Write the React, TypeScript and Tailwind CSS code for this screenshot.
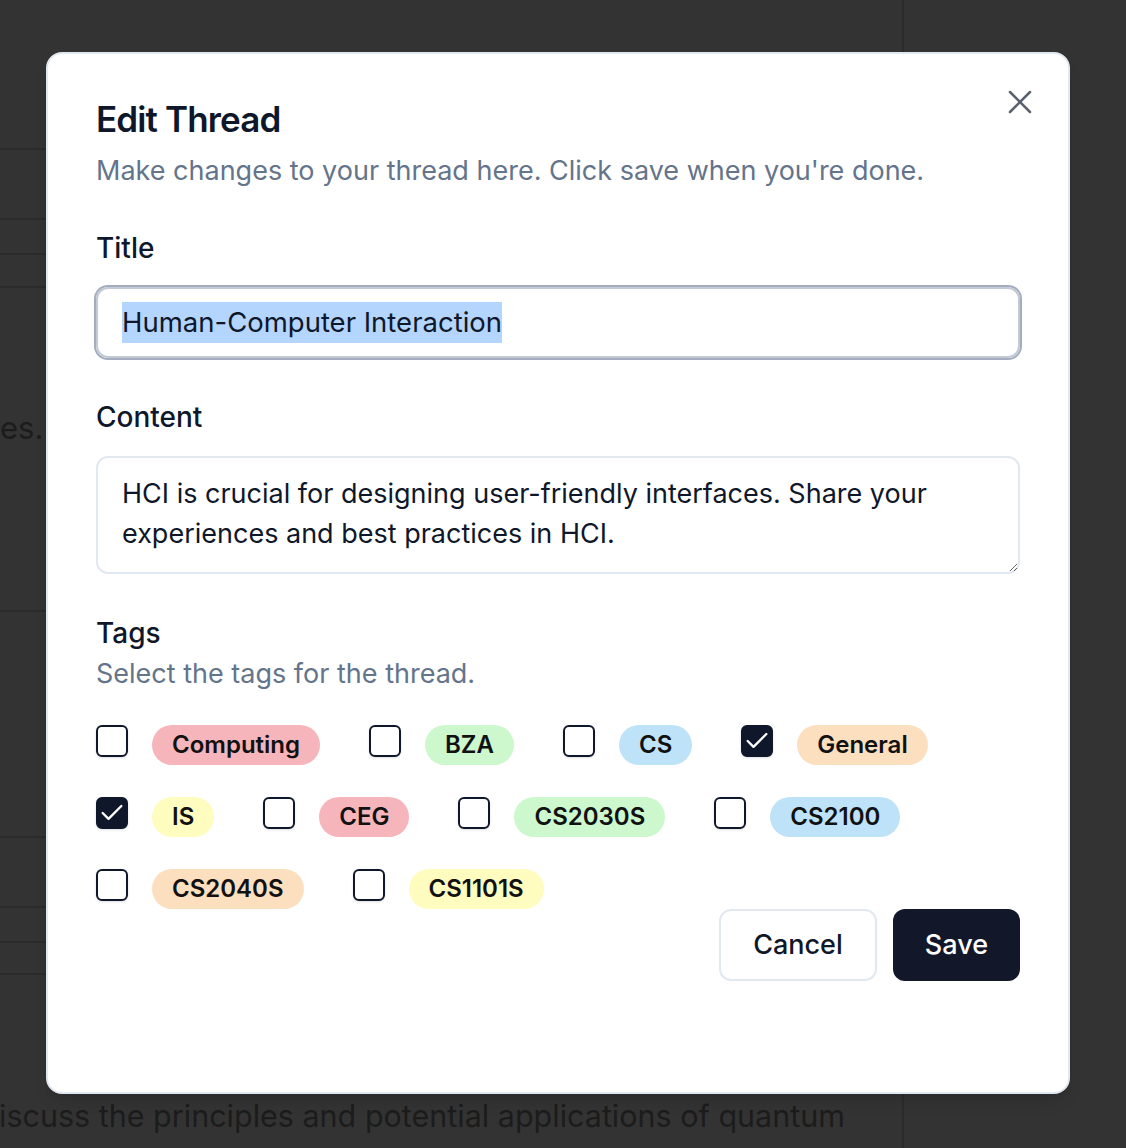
import { X, Check } from "lucide-react";

interface Tag {
  name: string;
  color: string;
  checked: boolean;
}

const tags: Tag[] = [
  { name: "Computing", color: "bg-[#f5b5ba]", checked: false },
  { name: "BZA", color: "bg-[#cdf7cd]", checked: false },
  { name: "CS", color: "bg-[#bee3f8]", checked: false },
  { name: "General", color: "bg-[#fbdfbf]", checked: true },
  { name: "IS", color: "bg-[#fefcbf]", checked: true },
  { name: "CEG", color: "bg-[#f5b5ba]", checked: false },
  { name: "CS2030S", color: "bg-[#cdf7cd]", checked: false },
  { name: "CS2100", color: "bg-[#bee3f8]", checked: false },
  { name: "CS2040S", color: "bg-[#fbdfbf]", checked: false },
  { name: "CS1101S", color: "bg-[#fefcbf]", checked: false },
];

function Checkbox({ checked }: { checked: boolean }) {
  return (
    <div
      className={`flex h-[32px] w-[32px] shrink-0 items-center justify-center rounded-[6px] border-2 border-[#0f172a] shadow-sm ${
        checked ? "bg-[#0f172a] text-white" : "bg-white"
      }`}
    >
      {checked && <Check size={28} strokeWidth={2} />}
    </div>
  );
}

// dimmed page behind the dialog
function Backdrop() {
  return (
    <div className="flex h-full">
      <div className="flex w-[904px] flex-col border-r-2 border-[#2b2b2b] text-[31px] leading-[48px] text-[#1c1c1c]">
        <div className="h-[150px] shrink-0 border-b-2 border-[#2b2b2b]" />
        <div className="h-[70px] shrink-0 border-b-2 border-[#2b2b2b]" />
        <div className="h-[35px] shrink-0 border-b-2 border-[#2b2b2b]" />
        <div className="h-[33px] shrink-0 border-b-2 border-[#2b2b2b]" />
        <div className="h-[324px] shrink-0 border-b-2 border-[#2b2b2b] pt-[116px]">es.</div>
        <div className="h-[226px] shrink-0 border-b-2 border-[#2b2b2b]" />
        <div className="h-[70px] shrink-0 border-b-2 border-[#2b2b2b]" />
        <div className="h-[35px] shrink-0 border-b-2 border-[#2b2b2b]" />
        <div className="h-[32px] shrink-0 border-b-2 border-[#2b2b2b]" />
        <div className="overflow-hidden whitespace-nowrap pt-[117px] text-[30.5px]">
          <span className="ml-[-23px]">Discuss the principles and potential applications of quantum</span>
        </div>
      </div>
      <div className="flex-1" />
    </div>
  );
}

export default function App() {
  return (
    <div className="relative h-[1148px] w-[1126px] overflow-hidden bg-[#333333] font-['Inter',sans-serif]">
      <Backdrop />

      <div className="absolute left-[46px] top-[52px] h-[1042px] w-[1024px] rounded-[16px] border-2 border-[#e2e8f0] bg-white px-[48px] pt-[48px] shadow-lg">
        <button className="absolute right-[28px] top-[28px] flex h-[40px] w-[40px] items-center justify-center text-[#5a6170]">
          <X size={40} strokeWidth={1.5} />
        </button>

        <h2 className="text-[35px] font-semibold leading-[34px] tracking-tight text-[#0f172a]">Edit Thread</h2>
        <p className="mt-[15px] text-[27px] leading-[40px] text-[#64748b]">
          Make changes to your thread here. Click save when you're done.
        </p>

        <div className="mt-[43px] text-[28px] font-medium leading-[28px] text-[#0f172a]">Title</div>
        <div className="mt-[25px] flex h-[71px] items-center rounded-[12px] border-2 border-[#c3cad6] px-[24px] text-[27.5px] text-[#0f172a] shadow-[0_0_0_2px_#a3adbe]">
          <span className="bg-[#b4d5fe]">Human-Computer Interaction</span>
        </div>

        <div className="mt-[45px] text-[28px] font-medium leading-[28px] text-[#0f172a]">Content</div>
        <textarea
          className="mt-[25px] block h-[118px] w-full rounded-[12px] border-2 border-[#e2e8f0] px-[24px] py-[16px] text-[27px] leading-[40px] text-[#0f172a] outline-none"
          defaultValue="HCI is crucial for designing user-friendly interfaces. Share your experiences and best practices in HCI."
        />

        <div className="mt-[45px] text-[28px] font-medium leading-[28px] text-[#0f172a]">Tags</div>
        <p className="mt-[7px] text-[27px] leading-[40px] text-[#64748b]">Select the tags for the thread.</p>

        <div className="mt-[31px] flex flex-wrap gap-x-[49px] gap-y-[32px]">
          {tags.map((tag) => (
            <div key={tag.name} className="flex items-start gap-[24px]">
              <Checkbox checked={tag.checked} />
              <span
                className={`flex h-[40px] items-center rounded-full px-[20px] text-[24px] font-semibold text-[#111111] ${tag.color}`}
              >
                {tag.name}
              </span>
            </div>
          ))}
        </div>

        <div className="flex justify-end gap-[16px]">
          <button className="h-[72px] rounded-[12px] border-2 border-[#e2e8f0] bg-white px-[32px] text-[27px] font-medium text-[#0f172a]">
            Cancel
          </button>
          <button className="h-[72px] rounded-[12px] bg-[#121829] px-[32px] text-[27px] font-medium text-white">
            Save
          </button>
        </div>
      </div>
    </div>
  );
}
